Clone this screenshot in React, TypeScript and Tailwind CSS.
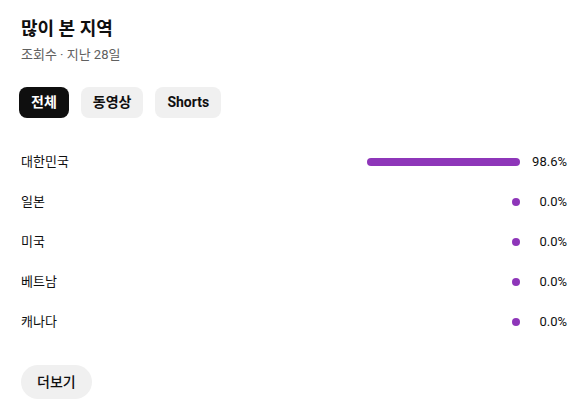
const rows = [
  { name: '대한민국', pct: 98.6 },
  { name: '일본', pct: 0 },
  { name: '미국', pct: 0 },
  { name: '베트남', pct: 0 },
  { name: '캐나다', pct: 0 },
]

const font = { fontFamily: 'Roboto, "Noto Sans CJK KR", sans-serif' }

export default function App() {
  return (
    <div className="w-[585px] h-[415px] bg-white text-[#0f0f0f] pl-[21px] pr-[18px] pt-[17px]" style={font}>
      <h1 className="text-[18px] font-bold leading-[24px]">많이 본 지역</h1>
      <p className="text-[13px] text-[#606060] leading-[18px] mt-[5px]">조회수 · 지난 28일</p>

      <div className="flex gap-3 mt-[23px] -ml-[2px]">
        <button className="h-[31px] px-[12px] rounded-lg bg-[#0f0f0f] text-white text-[14px] font-bold">전체</button>
        <button className="h-[31px] px-[12px] rounded-lg bg-[#f0f0f0] text-[14px] font-bold">동영상</button>
        <button className="h-[31px] px-[12px] rounded-lg bg-[#f0f0f0] text-[14px] font-bold">Shorts</button>
      </div>

      <div className="mt-[24px] flex flex-col">
        {rows.map((r) => (
          <div key={r.name} className="h-[40px] flex items-center">
            <span className="flex-1 text-[13px]">{r.name}</span>
            <div className="w-[155px] flex justify-end">
              <div
                className="h-[8px] rounded-full bg-[#8e36b9] min-w-[8px]"
                style={{ width: `${(r.pct / 100) * 155}px` }}
              />
            </div>
            <span className="w-[47px] text-right text-[13px]">{r.pct.toFixed(1)}%</span>
          </div>
        ))}
      </div>

      <button className="mt-[23px] h-[34px] px-[16px] rounded-full bg-[#f0f0f0] text-[14px] font-medium">더보기</button>
    </div>
  )
}
